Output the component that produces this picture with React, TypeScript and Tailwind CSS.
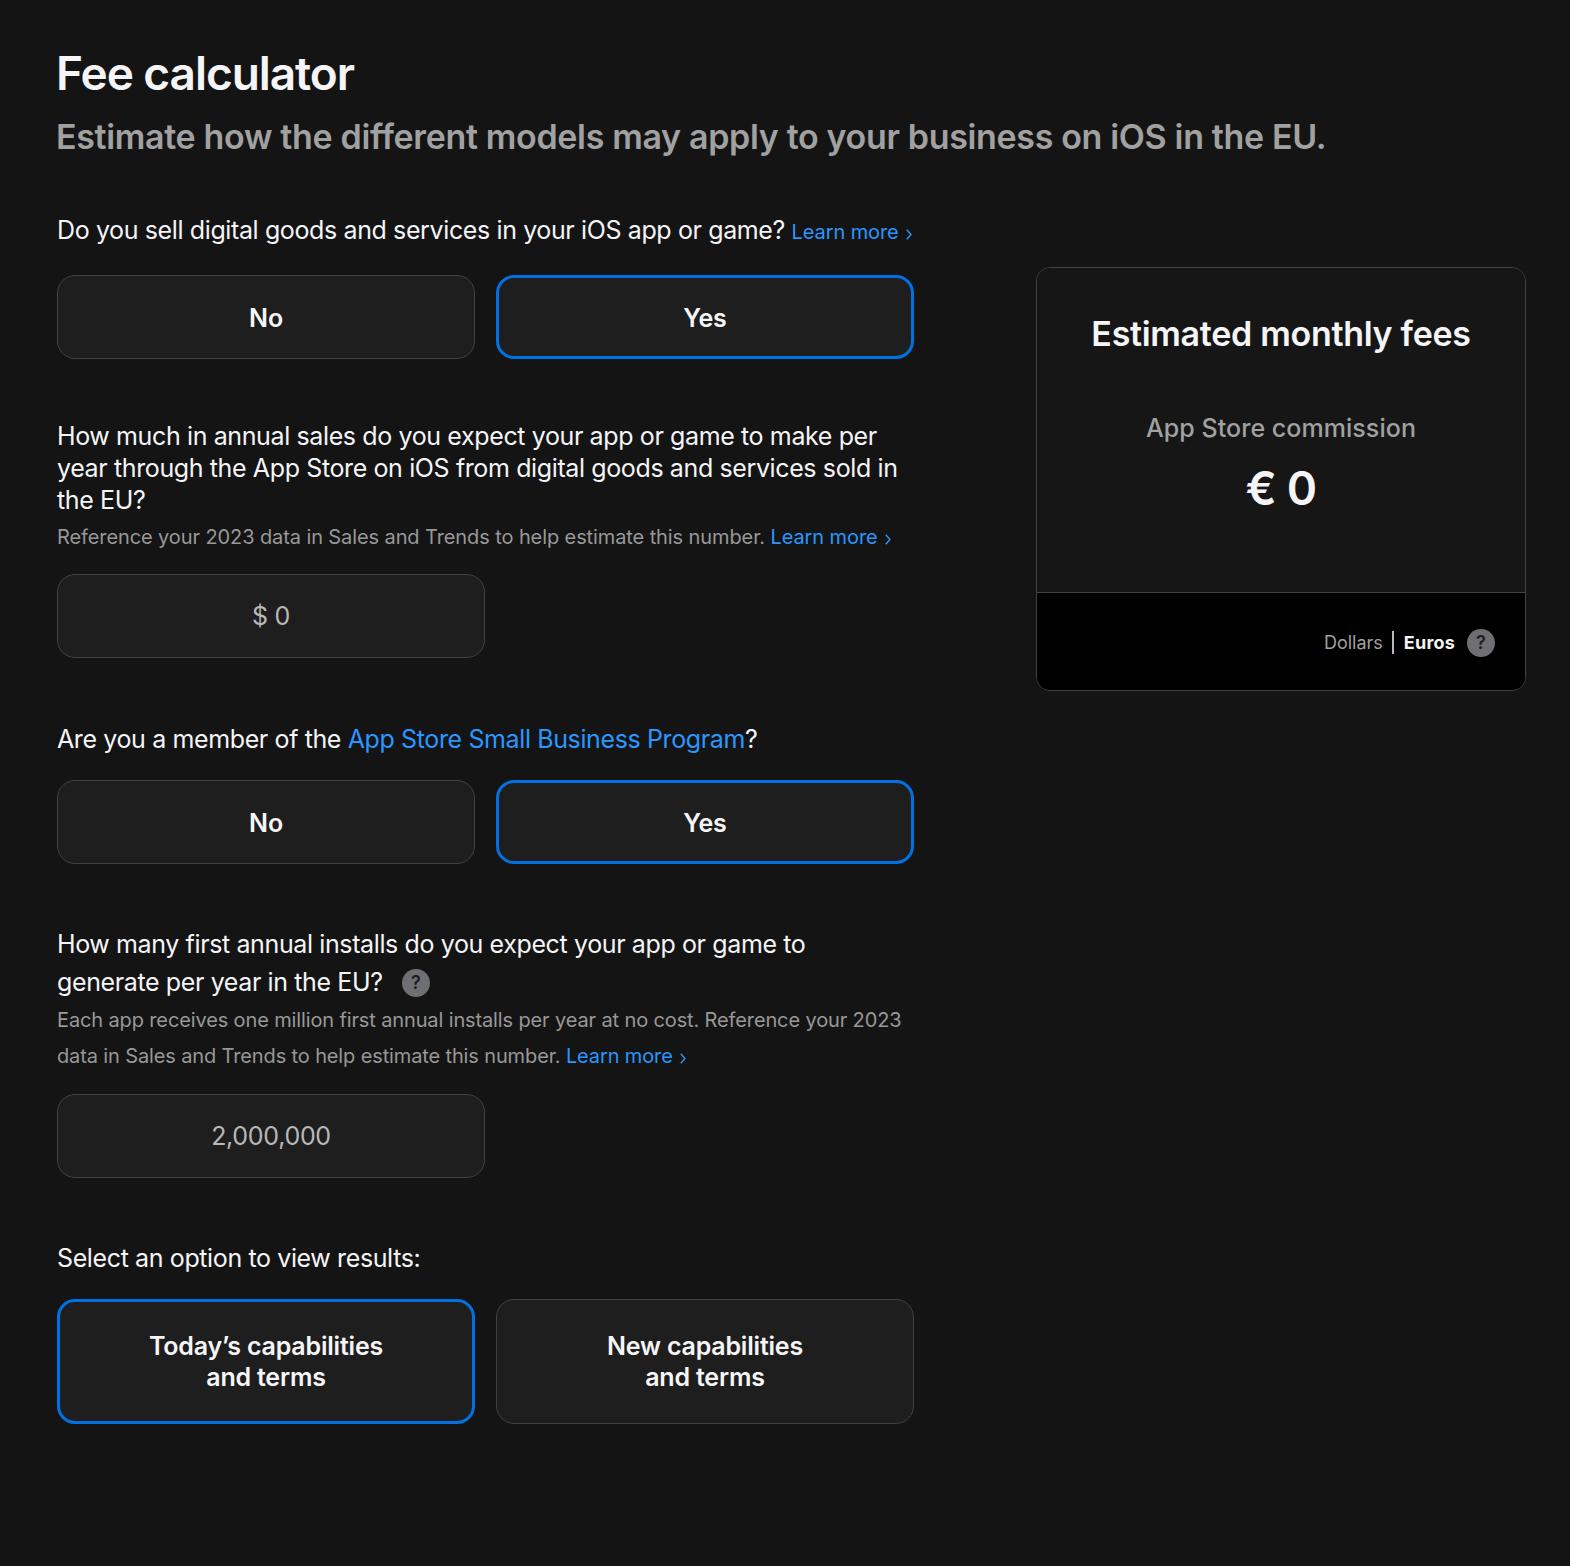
const blue = "text-[#2997ff]";

function Chevron() {
  return (
    <svg className="ml-[7px] inline-block h-[11px] w-[6px] align-[-1px]" viewBox="0 0 6 11" fill="none" stroke="currentColor" strokeWidth="1.4">
      <path d="M0.8 0.8 L5 5.5 L0.8 10.2" />
    </svg>
  );
}

function Learn() {
  return (
    <span className={blue}>
      Learn more
      <Chevron />
    </span>
  );
}

function Help() {
  return (
    <span className="inline-flex h-7 w-7 items-center justify-center rounded-full bg-[#6e6e73] text-[18px] font-semibold leading-none text-[#1d1d1f]">
      ?
    </span>
  );
}

function Choice({ selected, children, h = "h-[84px] pt-[2px]" }: { selected?: boolean; children: React.ReactNode; h?: string }) {
  return (
    <div
      className={`flex ${h} w-[418px] items-center justify-center rounded-[18px] bg-[#1e1e1e] text-center text-[25px] font-semibold leading-[31px] tracking-[-0.2px] text-[#f5f5f7] ${
        selected ? "border-[3px] border-[#0071e3]" : "border border-[#424242]"
      }`}
    >
      <span>{children}</span>
    </div>
  );
}

function Field({ children }: { children: React.ReactNode }) {
  return (
    <div className="flex h-[84px] w-[428px] items-center justify-center rounded-[18px] border border-[#424242] bg-[#1e1e1e] pt-[2px] text-[25px] tracking-[-0.3px] text-[#b8b8b8]">
      {children}
    </div>
  );
}

export default function App() {
  return (
    <div className="min-h-[1566px] bg-[#141414] px-[57px] pt-[40px] font-['Inter',sans-serif] text-[#f5f5f7]">
      <h1 className="-ml-[1px] text-[46px] font-semibold leading-[66px] tracking-[-1.05px]">Fee calculator</h1>
      <h2 className="-ml-[1px] mt-[1px] text-[34px] font-semibold leading-[60px] tracking-[-0.34px] text-[#a1a1a1]">
        Estimate how the different models may apply to your business on iOS in the EU.
      </h2>
      <div className="mt-[47px] mr-[-13px] flex items-start justify-between">
        <div className="w-[857px]">
          <p className="text-[25px] leading-[32px] tracking-[-0.38px]">
            Do you sell digital goods and services in your iOS app or game?{" "}
            <span className="text-[20px] tracking-[-0.1px]"><Learn /></span>
          </p>
          <div className="mt-[27px] flex gap-[21px]">
            <Choice>No</Choice>
            <Choice selected>Yes</Choice>
          </div>

          <p className="mt-[61px] text-[25px] leading-[32px] tracking-[-0.38px]">
            How much in annual sales do you expect your app or game to make per year through the App Store on iOS from digital goods and services sold in the EU?
          </p>
          <p className="mt-[5px] text-[20px] leading-[32px] tracking-[-0.1px] text-[#989898]">
            Reference your 2023 data in Sales and Trends to help estimate this number. <Learn />
          </p>
          <div className="mt-[21px]">
            <Field>$ 0</Field>
          </div>

          <p className="mt-[65px] text-[25px] leading-[32px] tracking-[-0.38px]">
            Are you a member of the <span className={blue}>App Store Small Business Program</span>?
          </p>
          <div className="mt-[25px] flex gap-[21px]">
            <Choice>No</Choice>
            <Choice selected>Yes</Choice>
          </div>

          <p className="mt-[61px] text-[25px] leading-[38px] tracking-[-0.38px]">
            How many first annual installs do you expect your app or game to
            <br />
            generate per year in the EU?
            <span className="-my-2 ml-[19px] inline-block align-[2px]"><Help /></span>
          </p>
          <p className="mt-[1px] text-[20px] leading-[36px] tracking-[-0.13px] text-[#989898]">
            Each app receives one million first annual installs per year at no cost. Reference your 2023 data in Sales and Trends to help estimate this number. <Learn />
          </p>
          <div className="mt-[20px]">
            <Field>2,000,000</Field>
          </div>

          <p className="mt-[64px] text-[25px] leading-[32px] tracking-[-0.38px]">Select an option to view results:</p>
          <div className="mt-[25px] flex gap-[21px]">
            <Choice selected h="h-[125px]">Today’s capabilities<br />and terms</Choice>
            <Choice h="h-[125px]">New capabilities<br />and terms</Choice>
          </div>
        </div>

        <div className="mt-[53px] w-[490px] overflow-hidden rounded-[14px] border border-[#424242]">
          <div className="flex h-[325px] flex-col items-center border-b border-[#424242] bg-[#161616]">
            <h3 className="mt-[44px] text-[34px] font-semibold leading-[44px] tracking-[-0.3px]">Estimated monthly fees</h3>
            <p className="mt-[56px] text-[25px] font-medium leading-[32px] tracking-[0.05px] text-[#a1a1a1]">App Store commission</p>
            <p className="mt-[14px] text-[46px] font-semibold leading-[60px] tracking-[-0.8px]">€ 0</p>
          </div>
          <div className="flex h-[97px] items-center justify-end bg-black pr-[30px] pt-[2px] text-[18px] leading-[24px]">
            <span className="text-[#a1a1a1]">Dollars</span>
            <span className="ml-[9px] mr-[10px] h-[23px] w-[2px] bg-[#b8b8b8]" />
            <span className="font-bold tracking-[0.2px]">Euros</span>
            <span className="ml-[12px] flex"><Help /></span>
          </div>
        </div>
      </div>
    </div>
  );
}
